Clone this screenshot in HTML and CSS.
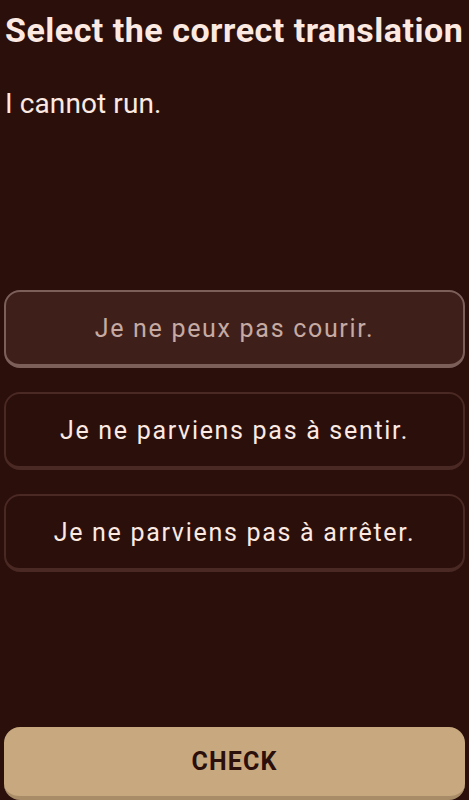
FILE: index.html
```html
<!DOCTYPE html>
<html lang="en">
<head>
    <meta charset="UTF-8">
    <meta name="viewport" content="width=device-width, initial-scale=1.0">
    <title>Select the correct translation</title>
    <link rel="stylesheet" href="styles.css">
</head>
<body>
    <div class="screen">
        <h1 class="title">Select the correct translation</h1>
        <p class="prompt">I cannot run.</p>

        <!-- Choices -->
        <div class="choices">
            <button class="choice selected">Je ne peux pas courir.</button>
            <button class="choice">Je ne parviens pas à sentir.</button>
            <button class="choice">Je ne parviens pas à arrêter.</button>
        </div>

        <button class="check">CHECK</button>
    </div>
</body>
</html>
```

FILE: styles.css
```css
body {
    margin: 0;
    background-color: #2a0f0a;
    font-family: Roboto, "Liberation Sans", sans-serif;
    color: #fbe9e2;
}
.screen {
    height: 800px;
    padding: 0 4px 0 4px;
    box-sizing: border-box;
    display: flex;
    flex-direction: column;
}
.title {
    margin: 11px 0 0 1px;
    font-size: 34px;
    font-weight: 700;
    line-height: 38px;
    letter-spacing: 0.5px;
    white-space: nowrap;
}
.prompt {
    margin: 39px 0 0 1px;
    font-size: 28px;
    line-height: 32px;
    letter-spacing: 0.1px;
}
.choices {
    margin-top: 170px;
    display: flex;
    flex-direction: column;
    gap: 24px;
}
.choice {
    height: 78px;
    width: 100%;
    border: 2px solid #4a2823;
    border-bottom-width: 4px;
    border-radius: 16px;
    background: #2a0f0a;
    color: #fbe9e2;
    font-family: inherit;
    font-size: 25px;
    letter-spacing: 1.7px;
    cursor: pointer;
}
.choice.selected {
    background: #3f1f1a;
    border-color: #7d5f5a;
    color: #c5aba4;
}
.check {
    margin-top: auto;
    height: 73px;
    width: 100%;
    border: none;
    border-bottom: 4px solid #a88c68;
    border-radius: 16px;
    background: #c8a97f;
    color: #2a0f0a;
    font-family: inherit;
    font-size: 25px;
    font-weight: 700;
    letter-spacing: 1.1px;
    cursor: pointer;
}
```
